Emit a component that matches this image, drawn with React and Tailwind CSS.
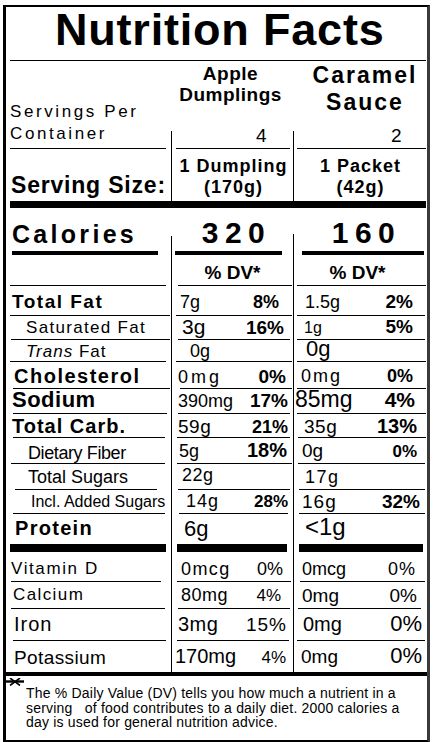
import React from 'react';
import clsx from 'clsx';

const Row = ({ className, children }) => (
    <div className={clsx('grid grid-cols-[161px_122px_133px]', className)}>{children}</div>
);

// one cell of the table: text on top, a rule (or bar) at the bottom
const Cell = ({ div, text, line, children }) => (
    <div className={clsx('flex flex-col', div && 'border-l border-black')}>
        <div className={clsx('flex items-baseline whitespace-nowrap leading-none', text)}>{children}</div>
        {line && <div className={clsx('mt-auto bg-black', line)} />}
    </div>
);

const Star = () => (
    <svg className="-ml-[4px] mt-[2px] block" width="18" height="8" viewBox="0 0 18 8">
        <path d="M0 3.5H18" stroke="black" strokeWidth="2.4" />
        <path d="M4 0L14 7.5M14 0L4 7.5" stroke="black" strokeWidth="1.6" />
    </svg>
);

export default function App() {
    return (
        <div className="min-h-screen bg-white pl-[3px] pt-[5px] font-['Liberation_Sans',Arial,sans-serif] text-black">
            <div className="w-[427px] border-b-[3px] border-l-[3px] border-r-[3px] border-t-2 border-black border-r-[#3a3a3a] pl-[4px] pr-[1px]">
                {/* title */}
                <div className="flex h-[54px] flex-col">
                    <h1 className="whitespace-nowrap pl-[45px] text-[45px] font-bold leading-none tracking-[0.8px]">Nutrition Facts</h1>
                    <div className="mt-auto h-px bg-black" />
                </div>

                {/* product names + servings per container */}
                <Row className="h-[88px]">
                    <div className="flex flex-col">
                        <div className="whitespace-nowrap pt-[40px] text-[17px] leading-[22px] tracking-[2.6px]">Servings Per<br />Container</div>
                        <div className="mr-[5px] mt-auto h-px bg-black" />
                    </div>
                    <div className="flex flex-col">
                        <div className="h-[70px] pr-[3px] pt-[2px] text-center text-[19px] font-bold leading-[21px] tracking-[0.5px]">Apple<br />Dumplings</div>
                        <div className="flex flex-1 flex-col border-l border-black">
                            <div className="-mt-[5px] pl-[84px] text-[19px] leading-none">4</div>
                            <div className="ml-[4px] mr-[3px] mt-auto h-px bg-black" />
                        </div>
                    </div>
                    <div className="flex flex-col">
                        <div className="h-[70px] pl-[11px] pt-[1px] text-center text-[23px] font-bold leading-[27px] tracking-[2px]">Caramel<br />Sauce</div>
                        <div className="flex flex-1 flex-col border-l border-black">
                            <div className="-mt-[5px] pl-[97px] text-[19px] leading-none">2</div>
                            <div className="ml-[3px] mt-auto h-px bg-black" />
                        </div>
                    </div>
                </Row>

                {/* serving size */}
                <Row className="h-[52px]">
                    <div className="whitespace-nowrap pl-[1px] pt-[25px] text-[23px] font-bold leading-none tracking-[0.8px]">Serving Size:</div>
                    <div className="whitespace-nowrap border-l border-black pl-[2px] pt-[7px] text-center text-[18px] font-bold leading-[21px] tracking-[1px]">1 Dumpling<br />(170g)</div>
                    <div className="whitespace-nowrap border-l border-black pl-[1px] pt-[7px] text-center text-[18px] font-bold leading-[21px] tracking-[1px]">1 Packet<br />(42g)</div>
                </Row>
                <div className="h-[7px] bg-black" />

                {/* calories */}
                <Row className="h-[47px]">
                    <div className="flex flex-col">
                        <div className="pl-[2px] pt-[14px] text-[25px] font-bold leading-none tracking-[3.3px]">Calories</div>
                        <div className="ml-[2px] mr-[13px] mt-auto h-[4px] bg-black" />
                    </div>
                    <div className="flex flex-col">
                        <div className="h-[28px] pl-[9px] pt-[10px] text-center text-[30px] font-bold leading-none tracking-[6.5px]">320</div>
                        <div className="flex flex-1 flex-col border-l border-black">
                            <div className="ml-[3px] mr-[11px] mt-auto h-[4px] bg-black" />
                        </div>
                    </div>
                    <div className="flex flex-col">
                        <div className="h-[26px] pl-[14px] pt-[10px] text-center text-[30px] font-bold leading-none tracking-[6.5px]">160</div>
                        <div className="flex flex-1 flex-col border-l border-black">
                            <div className="ml-[8px] mr-[2px] mt-auto h-[4px] bg-black" />
                        </div>
                    </div>
                </Row>

                <Row className="h-[31px]">
                    <Cell line="h-px mr-[5px]" />
                    <Cell div text="justify-center pt-[8px] text-[19px] font-bold" line="h-px ml-[6px] mr-[1px]">% DV*</Cell>
                    <Cell div text="justify-center pr-[5px] pt-[8px] text-[19px] font-bold" line="h-px ml-[3px]">% DV*</Cell>
                </Row>

                <Row className="h-[30px]">
                    <Cell text="pl-[2px] pt-[6px]" line="h-px mr-[1px]">
                        <span className="text-[19px] font-bold tracking-[1.5px]">Total Fat</span>
                    </Cell>
                    <Cell div text="pl-[8px] pr-[14px] pt-[7px]" line="h-px ml-[4px] mr-[1px]">
                        <span className="text-[18px]">7g</span>
                        <span className="ml-auto text-[18px] font-bold">8%</span>
                    </Cell>
                    <Cell div text="pl-[11px] pr-[13px] pt-[6px]" line="h-px ml-[3px] mr-[1px]">
                        <span className="text-[18px]">1.5g</span>
                        <span className="ml-auto text-[19px] font-bold">2%</span>
                    </Cell>
                </Row>

                <Row className="h-[24px]">
                    <Cell text="pl-[16px] pt-[3px]" line="h-px ml-[1px] mr-[1px]">
                        <span className="text-[17px] tracking-[1.3px]">Saturated Fat</span>
                    </Cell>
                    <Cell div text="pl-[10px] pr-[9px] pt-0" line="h-px ml-[6px] mr-[3px]">
                        <span className="text-[21px]">3g</span>
                        <span className="ml-auto text-[19px] font-bold">16%</span>
                    </Cell>
                    <Cell div text="pl-[10px] pr-[13px] pt-[1px]" line="h-px ml-[3px] mr-[1px]">
                        <span className="text-[16px]">1g</span>
                        <span className="ml-auto text-[19px] font-bold">5%</span>
                    </Cell>
                </Row>

                <Row className="h-[22px]">
                    <Cell text="pl-[16px] pt-[3px]" line="h-px mr-[5px]">
                        <span className="text-[17px] tracking-[1px]"><i>Trans</i> Fat</span>
                    </Cell>
                    <Cell div text="pl-[18px] pt-[2px]" line="h-px ml-[4px] mr-[1px]">
                        <span className="text-[18px]">0g</span>
                    </Cell>
                    <Cell div text="-mt-[2px] pl-[12px]" line="h-px ml-[3px]">
                        <span className="text-[22px]">0g</span>
                    </Cell>
                </Row>

                <Row className="h-[27px]">
                    <Cell text="pl-[4px] pt-[4px]" line="h-px ml-[3px] mr-[1px]">
                        <span className="text-[20px] font-bold tracking-[1.5px]">Cholesterol</span>
                    </Cell>
                    <Cell div text="pl-[6px] pr-[7px] pt-[5px]" line="h-px ml-[8px] mr-[1px]">
                        <span className="text-[18px] tracking-[3px]">0mg</span>
                        <span className="ml-auto text-[19px] font-bold">0%</span>
                    </Cell>
                    <Cell div text="pl-[7px] pr-[13px] pt-[5px]" line="h-px ml-[3px]">
                        <span className="text-[18px] tracking-[2px]">0mg</span>
                        <span className="ml-auto text-[18px] font-bold">0%</span>
                    </Cell>
                </Row>

                <Row className="h-[25px]">
                    <Cell text="pl-[2px] pt-0" line="h-px ml-[3px] mr-[4px]">
                        <span className="text-[22px] font-bold tracking-[0.5px]">Sodium</span>
                    </Cell>
                    <Cell div text="pl-[6px] pr-[5px] pt-[2px]" line="h-px ml-[6px] mr-[3px]">
                        <span className="text-[18px]">390mg</span>
                        <span className="ml-auto text-[19px] font-bold">17%</span>
                    </Cell>
                    <Cell div text="-mt-[1px] pl-[1px] pr-[11px]" line="h-px ml-[3px]">
                        <span className="text-[23px]">85mg</span>
                        <span className="ml-auto text-[21px] font-bold">4%</span>
                    </Cell>
                </Row>

                <Row className="h-[24px]">
                    <Cell text="pl-[2px] pt-[2px]" line="h-px ml-[3px] mr-[6px]">
                        <span className="text-[20px] font-bold tracking-[1px]">Total Carb.</span>
                    </Cell>
                    <Cell div text="pl-[6px] pr-[5px] pt-[3px]" line="h-px ml-[5px] mr-[3px]">
                        <span className="text-[19px] tracking-[0.5px]">59g</span>
                        <span className="ml-auto text-[18px] font-bold">21%</span>
                    </Cell>
                    <Cell div text="pl-[10px] pr-[9px] pt-[2px]" line="h-px ml-[4px]">
                        <span className="text-[19px] tracking-[0.5px]">35g</span>
                        <span className="ml-auto text-[20px] font-bold">13%</span>
                    </Cell>
                </Row>

                <Row className="h-[26px]">
                    <Cell text="pl-[18px] pt-[6px]" line="h-px ml-[1px] mr-[6px]">
                        <span className="text-[18px] tracking-[-0.4px]">Dietary Fiber</span>
                    </Cell>
                    <Cell div text="pl-[7px] pr-[6px] pt-[2px]" line="h-px ml-[5px] mr-[1px]">
                        <span className="text-[18px]">5g</span>
                        <span className="ml-auto text-[20px] font-bold">18%</span>
                    </Cell>
                    <Cell div text="pl-[8px] pr-[9px] pt-[3px]" line="h-px ml-[4px] mr-[1px]">
                        <span className="text-[19px]">0g</span>
                        <span className="ml-auto text-[17px] font-bold">0%</span>
                    </Cell>
                </Row>

                <Row className="h-[26px]">
                    <Cell text="pl-[18px] pt-[4px]" line="h-px ml-[5px] mr-[14px]">
                        <span className="text-[18px]">Total Sugars</span>
                    </Cell>
                    <Cell div text="pl-[10px] pt-[2px]" line="h-px ml-[6px] mr-[3px]">
                        <span className="text-[18px] tracking-[0.5px]">22g</span>
                    </Cell>
                    <Cell div text="pl-[11px] pt-[4px]" line="h-px ml-[5px] mr-[1px]">
                        <span className="text-[18px] tracking-[1.5px]">17g</span>
                    </Cell>
                </Row>

                <Row className="h-[24px]">
                    <Cell text="pl-[21px] pt-[4px]" line="h-px ml-[3px] mr-[6px]">
                        <span className="text-[16px]">Incl. Added Sugars</span>
                    </Cell>
                    <Cell div text="pl-[14px] pr-[5px] pt-[2px]" line="h-px ml-[7px] mr-[5px]">
                        <span className="text-[18px] tracking-[1px]">14g</span>
                        <span className="ml-auto text-[17px] font-bold">28%</span>
                    </Cell>
                    <Cell div text="pl-[8px] pr-[6px] pt-[2px]" line="h-px ml-[5px] mr-[1px]">
                        <span className="text-[19px] tracking-[1px]">16g</span>
                        <span className="ml-auto text-[19px] font-bold">32%</span>
                    </Cell>
                </Row>

                <Row className="h-[38px]">
                    <Cell text="pl-[5px] pt-[4px]" line="h-[8px] mr-[5px]">
                        <span className="text-[20px] font-bold tracking-[1.3px]">Protein</span>
                    </Cell>
                    <Cell div text="pl-[12px] pt-[4px]" line="h-[8px] ml-[5px] mr-[6px]">
                        <span className="text-[22px]">6g</span>
                    </Cell>
                    <Cell div text="pl-[11px] pt-[1px]" line="h-[8px] ml-[5px] mr-[3px]">
                        <span className="text-[24px]">&lt;1g</span>
                    </Cell>
                </Row>

                {/* vitamins and minerals */}
                <Row className="h-[30px]">
                    <Cell text="pl-[1px] pt-[8px]" line="h-px ml-[1px] mr-[10px]">
                        <span className="text-[17px] tracking-[1.6px]">Vitamin D</span>
                    </Cell>
                    <Cell div text="pl-[9px] pr-[10px] pt-[8px]" line="h-px ml-[5px] mr-[2px]">
                        <span className="text-[18px] tracking-[1.4px]">0mcg</span>
                        <span className="ml-auto text-[18px]">0%</span>
                    </Cell>
                    <Cell div text="pl-[8px] pr-[10px] pt-[8px]" line="h-px ml-[6px] mr-[1px]">
                        <span className="text-[18px]">0mcg</span>
                        <span className="ml-auto text-[18px] tracking-[1px]">0%</span>
                    </Cell>
                </Row>

                <Row className="h-[27px]">
                    <Cell text="pl-[3px] pt-[4px]" line="h-px ml-[1px] mr-[6px]">
                        <span className="text-[17px] tracking-[1.4px]">Calcium</span>
                    </Cell>
                    <Cell div text="pl-[9px] pr-[12px] pt-[4px]" line="h-px ml-[6px] mr-[3px]">
                        <span className="text-[18px] tracking-[0.5px]">80mg</span>
                        <span className="ml-auto text-[17px]">4%</span>
                    </Cell>
                    <Cell div text="pl-[8px] pr-[9px] pt-[4px]" line="h-px ml-[4px] mr-[5px]">
                        <span className="text-[19px]">0mg</span>
                        <span className="ml-auto text-[19px]">0%</span>
                    </Cell>
                </Row>

                <Row className="h-[32px]">
                    <Cell text="pl-[4px] pt-[5px]" line="h-px ml-[3px] mr-[5px]">
                        <span className="text-[20px] tracking-[1px]">Iron</span>
                    </Cell>
                    <Cell div text="pl-[6px] pr-[6px] pt-[5px]" line="h-px ml-[5px] mr-[4px]">
                        <span className="text-[20px] tracking-[0.5px]">3mg</span>
                        <span className="ml-auto text-[19px] tracking-[1px]">15%</span>
                    </Cell>
                    <Cell div text="pl-[9px] pr-[4px] pt-[4px]" line="h-px ml-[3px] mr-[1px]">
                        <span className="text-[20px]">0mg</span>
                        <span className="ml-auto text-[22px]">0%</span>
                    </Cell>
                </Row>

                <Row className="h-[31px]">
                    <Cell text="pl-[4px] pt-[7px]">
                        <span className="text-[19px] tracking-[0.4px]">Potassium</span>
                    </Cell>
                    <Cell div text="pl-[3px] pr-[7px] pt-[5px]">
                        <span className="text-[20px]">170mg</span>
                        <span className="ml-auto text-[17px]">4%</span>
                    </Cell>
                    <Cell div text="pl-[7px] pr-[4px] pt-[4px]">
                        <span className="text-[19px]">0mg</span>
                        <span className="ml-auto text-[22px]">0%</span>
                    </Cell>
                </Row>
                <div className="-ml-[4px] -mr-[1px] h-[4px] bg-black" />

                {/* footnote */}
                <div className="h-[62px]">
                    <Star />
                    <p className="whitespace-nowrap pl-[16px] text-[14px] leading-[14.5px] tracking-[0.2px]">
                        The % Daily Value (DV) tells you how much a nutrient in a<br />
                        serving{'\u00a0\u00a0 '}of food contributes to a daily diet. 2000 calories a<br />
                        day is used for general nutrition advice.
                    </p>
                </div>
            </div>
        </div>
    );
}
